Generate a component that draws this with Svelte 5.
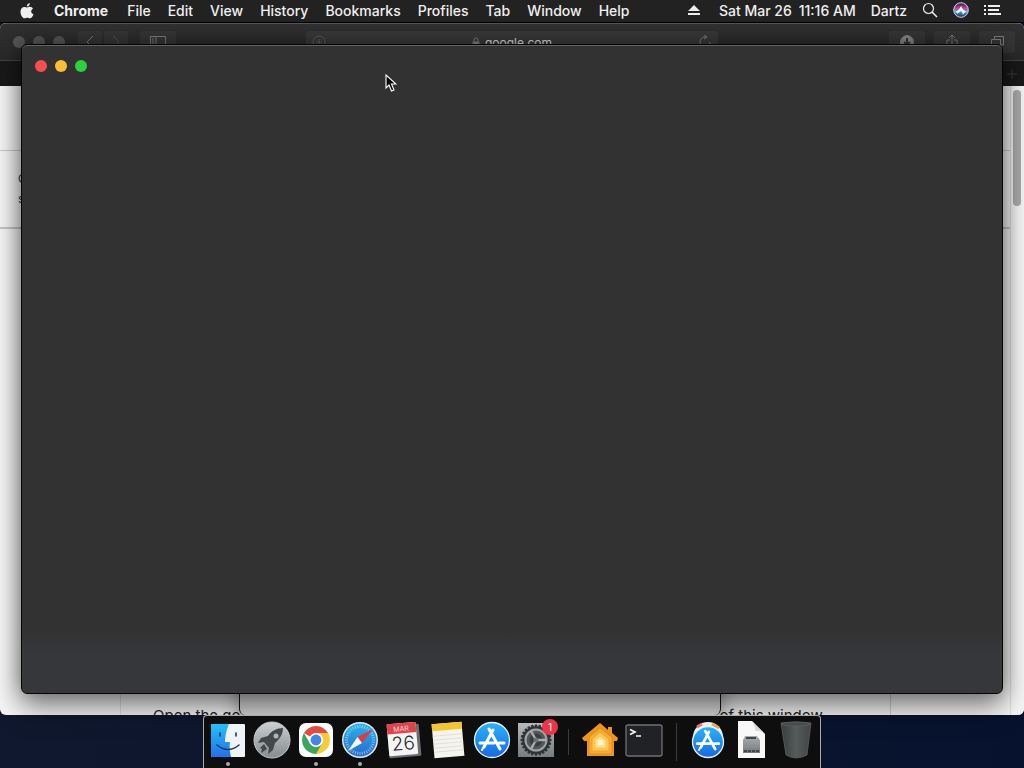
<script lang="ts">
    const menus = ["File", "Edit", "View", "History", "Bookmarks", "Profiles", "Tab", "Window", "Help"];

    interface DockItem {
        name: string;
        running?: boolean;
    }

    const apps: DockItem[] = [
        { name: "Finder", running: true },
        { name: "Launchpad" },
        { name: "Chrome", running: true },
        { name: "Safari", running: true },
        { name: "Calendar" },
        { name: "Notes" },
        { name: "App Store" },
        { name: "Preferences" },
    ];
    const tools: DockItem[] = [{ name: "Home" }, { name: "Terminal" }];
    const stacks: DockItem[] = [{ name: "Applications" }, { name: "Disk Image" }, { name: "Trash" }];
    const groups = [apps, tools, stacks];

    const teeth = Array.from({ length: 24 }, (_, i) => i * 15);
    const ticks = Array.from({ length: 36 }, (_, i) => i * 10);
</script>

{#snippet storeLetter()}
    <g stroke="#fff" stroke-width="3" stroke-linecap="round" fill="none">
        <path d="M21 10 L12 27 M17 9 L28 29 M8 23 H22 M27 23 H32" />
        <path d="M11 28 L10 30" stroke-width="2" />
    </g>
{/snippet}

{#snippet icon(name: string)}
    <svg class="icon" viewBox="0 0 40 40" aria-hidden="true">
        {#if name === "Finder"}
            <rect x="3" y="4" width="34" height="33" rx="1" fill="#eef4fa" />
            <path d="M4 4 H21 C18 11 17 17 17 22 H22 C21 27 22 33 23 37 H4 Q3 37 3 36 V5 Q3 4 4 4" fill="url(#finder)" />
            <path d="M12 13 V16 M28 13 V16" stroke="#1c3854" stroke-width="1.6" stroke-linecap="round" />
            <path d="M9 25 Q20 34 31 25" stroke="#1c3854" stroke-width="1.5" fill="none" stroke-linecap="round" />
        {:else if name === "Launchpad"}
            <circle cx="20" cy="20" r="18" fill="url(#steel)" stroke="#c5c9cb" />
            <path d="M31 8 C25 8 19 11 16 16 L9 18 L6 23 L12 22 L17 28 L16 34 L21 30 L23 23 C28 19 31 14 31 8" fill="#43484b" />
            <path d="M12 24 L8 28 L10 29 L9 33 L15 29 Z" fill="#43484b" />
            <circle cx="24" cy="16" r="2.5" fill="#aeb5b8" />
        {:else if name === "Chrome"}
            <rect x="3" y="3" width="34" height="34" rx="7" fill="#fcfcfc" />
            <path d="M20 20 L7.9 13 A14 14 0 0 1 32.1 13 Z" fill="#e24b40" />
            <path d="M20 20 V13 H32.1 A14 14 0 0 1 20 34 Z" fill="#f8cb38" />
            <path d="M20 20 L26 23.5 L20 34 A14 14 0 0 1 7.9 13 L14 23.5 Z" fill="#3ba65b" />
            <path d="M20 13 H32.1 L26 20 Z" fill="#f8cb38" />
            <circle cx="20" cy="20" r="7" fill="#fff" />
            <circle cx="20" cy="20" r="5.4" fill="#4384ee" />
        {:else if name === "Safari"}
            <circle cx="20" cy="20" r="18" fill="#e8edf0" />
            <circle cx="20" cy="20" r="16.6" fill="url(#compass)" />
            {#each ticks as angle}
                <path d="M20 5 V8" stroke="#c5e5fa" stroke-width=".6" transform="rotate({angle} 20 20)" />
            {/each}
            <path d="M33 9 L17.5 17 L22 23 Z" fill="#e33943" />
            <path d="M8 31 L17.5 17 L22 23 Z" fill="#f5f6f7" />
        {:else if name === "Calendar"}
            <g transform="rotate(-5 20 20)">
                <rect x="4" y="5" width="32" height="32" rx="1" fill="#6b6c71" />
                <rect x="4" y="3" width="29" height="32" rx="1" fill="#f4f4f6" />
                <path d="M4 4 Q4 3 5 3 H32 Q33 3 33 4 V13 H4 Z" fill="#dd434b" />
                <text x="18" y="11" font-size="7" fill="#ffd5d5" text-anchor="middle">MAR</text>
                <text x="19" y="30" font-size="19" fill="#29292c" text-anchor="middle" font-weight="300">26</text>
            </g>
        {:else if name === "Notes"}
            <g transform="rotate(-5 20 20)">
                <rect x="5" y="3" width="30" height="34" fill="#f5f4ef" />
                <rect x="5" y="3" width="30" height="7" fill="#f4c62c" />
                <path d="M5 15 H35 M5 19 H35 M5 23 H35 M5 27 H35 M5 31 H35" stroke="#d8d7d3" stroke-width=".7" />
            </g>
        {:else if name === "App Store"}
            <circle cx="20" cy="20" r="17.5" fill="url(#store)" stroke="#edf6ff" stroke-width="1.3" />
            {@render storeLetter()}
        {:else if name === "Preferences"}
            <rect x="2" y="3" width="36" height="34" fill="url(#prefs)" />
            <circle cx="20" cy="20" r="13.5" fill="#383b3d" />
            {#each teeth as angle}
                <path d="M19 4.5 H21 L22 8 H18 Z" fill="#303335" transform="rotate({angle} 20 20)" />
            {/each}
            <circle cx="20" cy="20" r="10.5" fill="#54585b" stroke="#a0a5a8" stroke-width="2" />
            <circle cx="20" cy="20" r="6.5" fill="#393d3f" />
            <path d="M20 20 L15 11 M20 20 H30 M20 20 L15 29" stroke="#a9adaf" stroke-width="2.4" />
            <circle cx="20" cy="20" r="2.5" fill="#6d7275" />
        {:else if name === "Home"}
            <path d="M20 3 L2 18 L4 21 H7 V36 H34 V21 H37 L38 18 L32 13 V7 H28 V10 Z" fill="#ee951d" />
            <path d="M20 8 L9 17 V34 H32 V17 Z" fill="#f6ad32" stroke="#e58a16" />
            <path d="M20 12 L12 19 V31 H29 V19 Z" fill="#ffc85a" stroke="#f4a22a" />
            <path d="M20 16 L15 20 V28 H26 V20 Z" fill="#ffe294" stroke="#ffc148" />
            <rect x="18" y="20" width="5" height="5" fill="#fff7cf" />
        {:else if name === "Terminal"}
            <rect x="2" y="5" width="36" height="31" rx="2" fill="#202226" stroke="#707274" stroke-width="1.3" />
            <path d="M6 9.5 L11 12 L6 14.5 M12 16 H17" stroke="#f6f6f6" stroke-width="1.7" fill="none" />
        {:else if name === "Applications"}
            <circle cx="20" cy="17" r="15" fill="#f2eee8" />
            <path d="M9 7 L14 4" stroke="#e9737c" stroke-width="3" />
            <path d="M24 4 L31 8" stroke="#eda64c" stroke-width="3" />
            <circle cx="20" cy="22" r="15.5" fill="url(#store)" stroke="#e9f4ff" stroke-width="1.3" />
            <g transform="translate(2 3) scale(.9)">
                {@render storeLetter()}
            </g>
        {:else if name === "Disk Image"}
            <path d="M6 1 H20 L33 14 V38 H6 Z" fill="#f8f8f8" />
            <path d="M20 1 Q24 8 23 11 Q29 10 33 14 Z" fill="#d8d8d8" />
            <path d="M13 16 H25 L28 20 V33 H11 V20 Z" fill="url(#drive)" />
            <path d="M14 18 H24" stroke="#444" stroke-width="2" />
            <path d="M12 31 H27" stroke="#414447" stroke-width="2" stroke-dasharray="3 1" />
        {:else if name === "Trash"}
            <path d="M5 3 Q20 1 35 3 L31 35 Q20 41 10 35 Z" fill="url(#trash)" stroke="#5d6061" stroke-width=".8" />
            <ellipse cx="20" cy="4" rx="15" ry="2" fill="#484b4c" stroke="#606363" stroke-width=".7" />
        {/if}
    </svg>
{/snippet}

<svg class="defs" aria-hidden="true">
    <defs>
        <linearGradient id="finder" x2="0" y2="1"><stop stop-color="#24c0f8" /><stop offset="1" stop-color="#2371e7" /></linearGradient>
        <linearGradient id="steel" x2="0" y2="1"><stop stop-color="#cbd0d2" /><stop offset="1" stop-color="#858b8e" /></linearGradient>
        <linearGradient id="compass" x2="0" y2="1"><stop stop-color="#29b4e8" /><stop offset="1" stop-color="#246bd2" /></linearGradient>
        <linearGradient id="store" x2="0" y2="1"><stop stop-color="#29b5f8" /><stop offset="1" stop-color="#1668e5" /></linearGradient>
        <linearGradient id="prefs" x2="0" y2="1"><stop stop-color="#b5b9bb" /><stop offset="1" stop-color="#777c80" /></linearGradient>
        <linearGradient id="drive" x2="0" y2="1"><stop stop-color="#aaaeb0" /><stop offset="1" stop-color="#74797c" /></linearGradient>
        <linearGradient id="trash"><stop stop-color="#383c3d" /><stop offset=".5" stop-color="#555a5b" /><stop offset="1" stop-color="#404445" /></linearGradient>
        <linearGradient id="siri" x2="0" y2="1"><stop stop-color="#2d184a" /><stop offset=".35" stop-color="#c23e91" /><stop offset=".6" stop-color="#529de9" /><stop offset="1" stop-color="#172750" /></linearGradient>
    </defs>
</svg>

<div class="desktop">
    <header class="menubar">
        <nav class="menus">
            <button class="apple" aria-label="Apple menu">
                <svg width="14" height="17" viewBox="0 0 14 17" fill="#eee">
                    <path d="M9.8 1 C9.8 3 8.5 4.5 6.8 4.5 C6.7 2.7 8 1.3 9.8 1 M7 5.5 C8 5.5 8.6 4.8 10 4.8 C11.2 4.8 12.4 5.5 13 6.5 C10.4 8 10.8 11.4 13.5 12.3 C12.8 14.2 11.5 16.3 10 16.3 C8.9 16.3 8.5 15.7 7.3 15.7 C6 15.7 5.6 16.3 4.6 16.3 C2.5 16.3 .5 12.7 .5 9.7 C.5 6.7 2.3 4.9 4.3 4.9 C5.5 4.9 6.3 5.5 7 5.5" />
                </svg>
            </button>
            <button class="current">Chrome</button>
            {#each menus as menu}
                <button>{menu}</button>
            {/each}
        </nav>
        <div class="status">
            <button class="eject" aria-label="Eject">
                <svg width="12" height="12" viewBox="0 0 12 12" fill="#eee"><path d="M6 1 L12 7 H0 Z M0 9 H12 V11 H0 Z" /></svg>
            </button>
            <button class="clock"><span>Sat Mar 26</span><span>11:16 AM</span></button>
            <button>Dartz</button>
            <button aria-label="Spotlight">
                <svg width="16" height="16" viewBox="0 0 16 16" fill="none" stroke="#eee" stroke-width="1.2"><circle cx="6.5" cy="6.5" r="5" /><path d="M10 10 L15 15" stroke-width="1.6" /></svg>
            </button>
            <button aria-label="Siri">
                <svg width="16" height="16" viewBox="0 0 16 16"><circle cx="8" cy="8" r="7.3" fill="url(#siri)" stroke="#d5d0e2" /><path d="M2 10 Q6 8.5 8 4 Q10 8.5 14 10 Q11 10 10 13 Q9.5 10 8 9 Q6.5 10 4 12 Q5 10.500 2 10" fill="#e8f7ff" /></svg>
            </button>
            <button aria-label="Notification Center">
                <svg width="17" height="12" viewBox="0 0 17 12" stroke="#eee" stroke-width="1.8"><path d="M0 2 H2 M4 2 H16 M0 6 H2 M4 6 H15 M0 10 H2 M4 10 H17" /></svg>
            </button>
        </div>
    </header>

    <section class="window browser" aria-label="Safari">
        <div class="toolbar">
            <div class="tools">
                <div class="lights"><i></i><i></i><i></i></div>
                <div class="history">
                    <button class="tool" aria-label="Back"><svg width="10" height="14" viewBox="0 0 10 14"><path d="M8 1 L2 7 L8 13" /></svg></button>
                    <button class="tool dim" aria-label="Forward"><svg width="10" height="14" viewBox="0 0 10 14"><path d="M2 1 L8 7 L2 13" /></svg></button>
                </div>
                <button class="tool wide" aria-label="Sidebar"><svg width="16" height="12" viewBox="0 0 16 12"><path d="M.5 .5 H15.5 V11.5 H.5 Z M6 1 V11 M2 3 H4 M2 5 H4 M2 7 H4" /></svg></button>
            </div>
            <div class="address">
                <svg class="muted" width="14" height="14" viewBox="0 0 14 14"><circle cx="7" cy="7" r="6" /><path d="M4 7 H10 M7 4 V10" /></svg>
                <span class="host">
                    <svg width="8" height="11" viewBox="0 0 8 11"><path d="M2 5 V3 Q2 1 4 1 Q6 1 6 3 V5" /><rect x="1" y="5" width="6" height="5" fill="#888" /></svg>
                    google.com
                </span>
                <svg width="14" height="14" viewBox="0 0 14 14"><path d="M8 2 A5 5 0 1 0 12 7 M6 0 L9 2 L6 4" /></svg>
            </div>
            <div class="tools end">
                <button class="tool wide" aria-label="Downloads"><svg width="14" height="14" viewBox="0 0 14 14"><circle cx="7" cy="7" r="6.5" fill="#888" /><path d="M7 3 V10 M4 7 L7 10 L10 7" stroke="#333" stroke-width="2" /></svg></button>
                <button class="tool wide" aria-label="Share"><svg width="12" height="16" viewBox="0 0 12 16"><path d="M4 6 H1 V15 H11 V6 H8 M6 11 V1 M3 4 L6 1 L9 4" /></svg></button>
                <button class="tool wide" aria-label="Tabs"><svg width="13" height="13" viewBox="0 0 13 13"><path d="M3.5 3 V.5 H12.5 V9 H10 M.5 3.5 H9.5 V12.5 H.5 Z" /></svg></button>
            </div>
        </div>
        <div class="tabs">
            <button aria-label="New tab"><svg width="12" height="12" viewBox="0 0 12 12"><path d="M6 1 V11 M1 6 H11" stroke="#3c3c3c" /></svg></button>
        </div>
        <div class="page">
            <div class="content">
                <div class="searchbar"></div>
                <div class="result">
                    <span>G</span>
                    <a href="#search">s</a>
                </div>
                <div class="article">
                    <p><span>Open the go</span><span>of this window.</span></p>
                </div>
            </div>
            <div class="scroller"><div class="thumb"></div></div>
        </div>
    </section>

    <section class="window installer" aria-label="Installer"></section>

    <section class="window chrome" aria-label="Chrome">
        <div class="lights">
            <button class="close" aria-label="Close"></button>
            <button class="minimize" aria-label="Minimize"></button>
            <button class="zoom" aria-label="Zoom"></button>
        </div>
    </section>

    <footer class="dock">
        {#each groups as group, i}
            {#if i > 0}
                <div class="divider" class:tall={i === 2}></div>
            {/if}
            {#each group as item}
                <button class="dock-item" aria-label={item.name}>
                    {@render icon(item.name)}
                    {#if item.name === "Preferences"}
                        <span class="badge">1</span>
                    {/if}
                    <i class="dot" class:running={item.running}></i>
                </button>
            {/each}
        {/each}
    </footer>

    <svg class="cursor" width="12" height="18" viewBox="0 0 12 18" aria-hidden="true">
        <path d="M1 1 V14 L4 11 L6.5 17 L9 16 L6.5 10 H11 Z" fill="#080808" stroke="#fff" stroke-width="1.1" />
    </svg>
</div>

<style>
    :global(body) {
        margin: 0;
        background: #0b142b;
    }

    .desktop {
        position: relative;
        height: 100vh;
        overflow: hidden;
        background: linear-gradient(90deg, #10182f, #07122e);
        font-family: Inter, "Liberation Sans", sans-serif;
        font-size: 14px;
    }

    .defs {
        position: absolute;
        width: 0;
        height: 0;
    }

    button {
        display: flex;
        align-items: center;
        justify-content: center;
        padding: 0;
        border: 0;
        background: none;
        color: inherit;
        font: inherit;
    }

    .menubar {
        display: flex;
        justify-content: space-between;
        height: 20px;
        padding: 0 23px 2px 20px;
        background: #222;
        border-bottom: 1px solid #000;
        color: #f0f0f0;
        font-weight: 500;
        white-space: nowrap;
    }

    .menus,
    .status {
        display: flex;
        align-items: center;
        gap: 17px;
    }

    .apple {
        margin-right: 3px;
    }

    .current {
        margin-right: 2px;
        font-weight: 700;
    }

    .status {
        gap: 15px;
    }

    .clock {
        gap: 7px;
    }

    .eject {
        margin-right: 4px;
    }

    .window {
        position: absolute;
        box-sizing: border-box;
    }

    .browser {
        top: 23px;
        left: 0;
        right: 0;
        bottom: 53px;
        display: flex;
        flex-direction: column;
        overflow: hidden;
        border-radius: 6px;
        background: #f5f5f5;
    }

    .toolbar {
        display: grid;
        grid-template-columns: 1fr 412px 1fr;
        align-items: center;
        height: 36px;
        background: linear-gradient(#303030, #292929);
        border-top: 1px solid #555;
        border-bottom: 1px solid #444;
    }

    .toolbar svg {
        fill: none;
        stroke: #7c7c7c;
    }

    .toolbar .muted {
        stroke: #5c5c5c;
    }

    .tools {
        display: flex;
        align-items: center;
        gap: 12px;
        padding-left: 13px;
    }

    .tools.end {
        justify-content: flex-end;
        gap: 9px;
        padding: 0 9px 0 0;
    }

    .lights {
        display: flex;
        gap: 8px;
    }

    .lights i,
    .lights button {
        width: 12px;
        height: 12px;
        border-radius: 50%;
        background: #565656;
    }

    .history {
        display: flex;
        gap: 2px;
        margin-left: 1px;
    }

    .tool {
        width: 24px;
        height: 22px;
        border-radius: 3px;
        background: #363636;
    }

    .tool.wide {
        width: 36px;
    }

    .tool.dim svg {
        stroke: #555;
    }

    .address {
        display: flex;
        align-items: center;
        justify-content: space-between;
        box-sizing: border-box;
        height: 22px;
        padding: 0 6px;
        border-radius: 3px;
        background: #393939;
    }

    .host {
        display: flex;
        align-items: center;
        gap: 5px;
        color: #ddd;
        font-size: 12px;
    }

    .tabs {
        display: flex;
        justify-content: flex-end;
        height: 25px;
        padding-right: 6px;
        background: #191919;
    }

    .page {
        display: flex;
        flex: 1;
    }

    .content {
        display: flex;
        flex: 1;
        flex-direction: column;
    }

    .searchbar {
        height: 64px;
        border-bottom: 1px solid #c9c9c9;
    }

    .result {
        display: flex;
        flex-direction: column;
        gap: 4px;
        height: 56px;
        padding: 20px 0 0 18px;
        border-bottom: 2px solid #c5c5c5;
        color: #333;
        font-size: 12px;
        line-height: 16px;
    }

    .result a {
        color: #247;
        text-decoration: none;
    }

    .article {
        display: flex;
        flex: 1;
        align-items: flex-end;
        margin: 0 119px 0 120px;
        border-left: 1px solid #ddd;
        border-right: 1px solid #ccc;
    }

    .article p {
        display: flex;
        flex: 1;
        justify-content: space-between;
        height: 8px;
        margin: 0 64px 0 32px;
        color: #222;
        font-size: 15px;
        line-height: 18px;
    }

    .scroller {
        width: 13px;
        padding-top: 4px;
        border-left: 1px solid #ddd;
        background: #f5f5f5;
    }

    .thumb {
        width: 8px;
        height: 116px;
        margin-left: 2px;
        border-radius: 4px;
        background: #aaa;
    }

    .installer {
        left: 239px;
        right: 303px;
        bottom: 53px;
        height: 120px;
        border: 1px solid #111;
        border-bottom: 0;
        border-radius: 0 0 6px 6px;
        background: #d8d8d8;
        box-shadow: 0 4px 20px rgba(0, 0, 0, 0.4);
    }

    .chrome {
        top: 44px;
        left: 21px;
        right: 21px;
        bottom: 74px;
        padding: 15px 13px;
        border: 1px solid #050505;
        border-radius: 6px;
        background: linear-gradient(#323232 calc(100% - 64px), #36373a calc(100% - 40px));
        box-shadow:
            inset 0 1px #626262,
            0 0 22px rgba(0, 0, 0, 0.45),
            0 16px 28px rgba(0, 0, 0, 0.35);
    }

    .lights .close {
        background: #f94e51;
    }

    .lights .minimize {
        background: #fbbd32;
    }

    .lights .zoom {
        background: #2dd13f;
    }

    .dock {
        position: absolute;
        bottom: 0;
        left: 50%;
        display: flex;
        height: 52px;
        padding: 0 2px;
        transform: translateX(-50%);
        border: 1px solid #aaa;
        border-bottom: 0;
        border-radius: 4px 4px 0 0;
        background: #0e0e0e;
    }

    .dock-item {
        position: relative;
        flex-direction: column;
        justify-content: flex-start;
        width: 44px;
        padding-top: 4px;
    }

    .icon {
        width: 40px;
        height: 40px;
    }

    .dot {
        width: 4px;
        height: 4px;
        margin-top: 2px;
        border-radius: 50%;
    }

    .dot.running {
        background: #aaa;
    }

    .badge {
        position: absolute;
        top: 3px;
        right: 0;
        width: 16px;
        border-radius: 50%;
        background: #ec3547;
        color: #fff;
        font-size: 10px;
        line-height: 16px;
    }

    .divider {
        width: 1px;
        height: 26px;
        margin: 13px 9px 0 10px;
        background: #3b3b3b;
    }

    .divider.tall {
        height: 38px;
        margin-top: 7px;
    }

    .cursor {
        position: absolute;
        top: 74px;
        left: 385px;
    }
</style>
